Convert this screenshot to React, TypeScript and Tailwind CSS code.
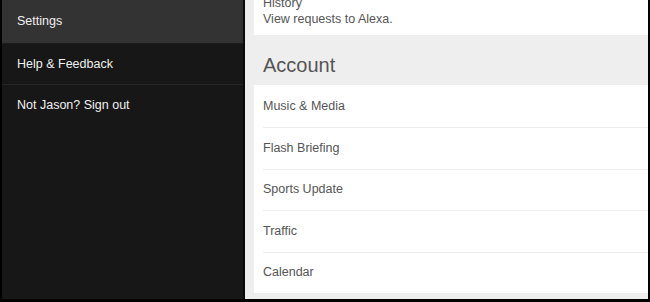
import React from "react";

const rows = ["Music & Media", "Flash Briefing", "Sports Update", "Traffic", "Calendar"];

export default function App() {
  return (
    <div
      className="w-[650px] h-[302px] bg-black pl-[2px] pr-[2px] pb-[3px] overflow-hidden"
      style={{ fontFamily: '"Liberation Sans", Arial, sans-serif' }}
    >
      <div className="flex h-full">
        <div className="w-[243px] h-full bg-[#171717] border-r-[2px] border-[#0a0a0a] flex flex-col">
          <div className="h-[43px] bg-[#333333] flex items-center pl-[15px] text-[12.5px] text-[#f0f0f0]">
            Settings
          </div>
          <div className="h-[42px] border-t border-[#1c1c1c] border-b border-b-[#262626] flex items-center pl-[15px] text-[12.5px] text-[#f0f0f0]">
            Help &amp; Feedback
          </div>
          <div className="h-[40px] flex items-center pl-[15px] text-[12.5px] text-[#f0f0f0]">
            Not Jason? Sign out
          </div>
        </div>
        <div className="flex-1 h-full bg-[#eeeeee] pl-[9px] flex flex-col">
          <div className="h-[35px] bg-white overflow-hidden flex flex-col justify-end pb-[8px] pl-[9px] text-[12.5px] leading-[16px] text-[#555555]">
            <div>History</div>
            <div>View requests to Alexa.</div>
          </div>
          <div className="h-[50px] flex items-center pt-[10px] pl-[9px] text-[20px] text-[#555555]">
            Account
          </div>
          <div className="bg-white flex flex-col">
            {rows.map((r, i) => (
              <div
                key={r}
                className={
                  i === 0
                    ? "h-[42px] ml-[9px] flex items-center text-[12.5px] text-[#555555]"
                    : "h-[41.5px] ml-[9px] border-t border-[#eeeeee] flex items-center text-[12.5px] text-[#555555]"
                }
              >
                {r}
              </div>
            ))}
          </div>
        </div>
      </div>
    </div>
  );
}
